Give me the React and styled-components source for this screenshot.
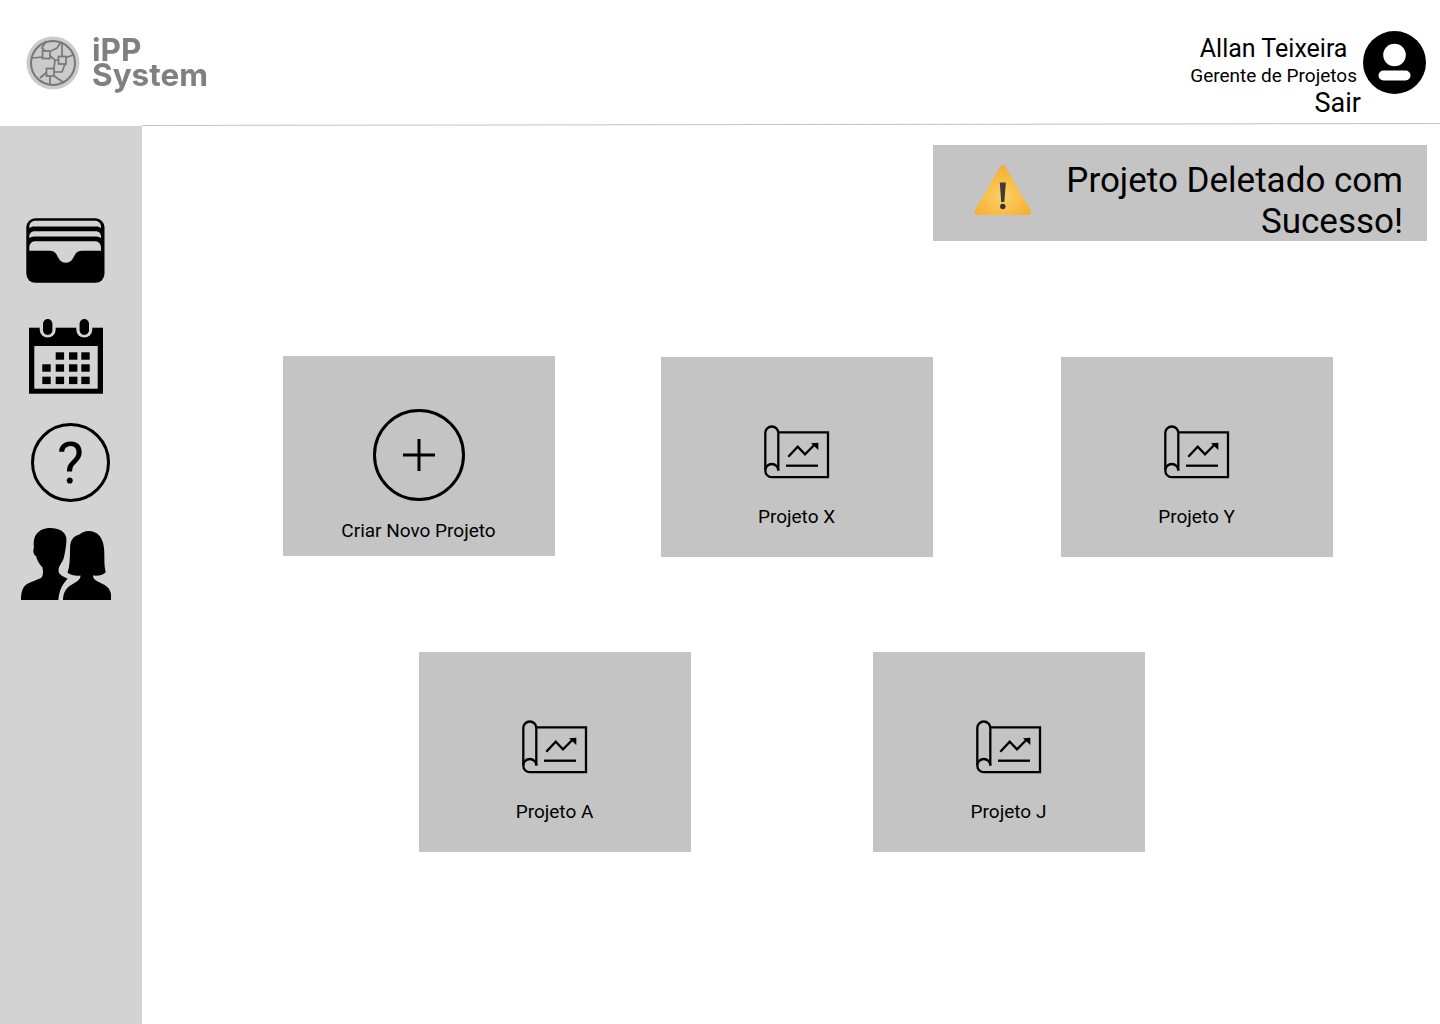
import React from "react";
import styled, { createGlobalStyle } from "styled-components";

const Global = createGlobalStyle`
  html, body { margin: 0; padding: 0; background: #fff; }
  body { font-family: Roboto, "Liberation Sans", sans-serif; color: #000; }
`;

const Page = styled.div`
  width: 1440px;
  height: 1024px;
  overflow: hidden;
  display: flex;
  flex-direction: column;
`;

const Header = styled.header`
  height: 124px;
  flex: none;
  display: flex;
  justify-content: space-between;
  align-items: flex-start;
  padding: 0 14px 0 26px;
  box-sizing: border-box;
`;

const Brand = styled.div`
  display: flex;
  align-items: flex-start;
  gap: 12px;
  padding-top: 36px;
  filter: blur(0.4px);
`;

const BrandName = styled.div`
  font-family: Inter, "Liberation Sans", sans-serif;
  font-weight: 700;
  font-size: 31.5px;
  line-height: 25px;
  margin-top: 1px;
  color: #808080;
`;

const User = styled.div`
  display: flex;
  align-items: flex-start;
  gap: 2px;
  padding-top: 31px;
`;

const UserInfo = styled.div`
  display: flex;
  flex-direction: column;
  margin-top: 3px;
`;

const UserName = styled.div`
  font-size: 25px;
  line-height: 30px;
  text-align: center;
  padding-right: 4px;
`;

const UserRole = styled.div`
  font-size: 19px;
  line-height: 23px;
  text-align: center;
  padding-right: 4px;
`;

const SignOut = styled.div`
  font-size: 27px;
  line-height: 28px;
  text-align: right;
  margin-top: 2px;
`;

const Rule = styled.div`
  height: 1px;
  flex: none;
  margin-left: 142px;
  background: #c4c4c4;
  transform: rotate(-0.08deg);
  margin-bottom: 1px;
`;

const Body = styled.div`
  flex: 1;
  display: flex;
  min-height: 0;
`;

const Sidebar = styled.nav`
  width: 142px;
  flex: none;
  background: #d3d3d3;
  display: flex;
  flex-direction: column;
  align-items: flex-start;
  padding-top: 92px;
  box-sizing: border-box;
`;

const NavSlot = styled.div`
  margin-left: ${(p) => p.$left}px;
  margin-top: ${(p) => p.$top}px;
  display: flex;
  svg { display: block; }
`;

const HelpCircle = styled.div`
  width: 79px;
  height: 79px;
  box-sizing: border-box;
  border: 3px solid #000;
  border-radius: 50%;
  padding-top: 2px;
  display: flex;
  align-items: center;
  justify-content: center;
  font-size: 57px;
  font-weight: 400;
  line-height: 1;
`;

const Main = styled.main`
  flex: 1;
  display: flex;
  flex-direction: column;
  min-width: 0;
`;

const Notice = styled.div`
  align-self: flex-end;
  width: 494px;
  height: 96px;
  margin: 19px 13px 0 0;
  padding: 0 24px 0 41px;
  box-sizing: border-box;
  background: #c4c4c4;
  display: flex;
  align-items: center;
  justify-content: space-between;
  svg { margin-bottom: 5px; }
`;

const NoticeText = styled.div`
  width: 370px;
  margin-top: 16px;
  font-size: 35px;
  line-height: 41px;
  text-align: right;
`;

const Row = styled.div`
  display: flex;
  align-items: flex-start;
  margin-top: ${(p) => p.$top}px;
`;

const Card = styled.div`
  width: 272px;
  height: 200px;
  flex: none;
  margin-left: ${(p) => p.$left}px;
  margin-top: ${(p) => p.$drop || 0}px;
  background: #c4c4c4;
  display: flex;
  flex-direction: column;
  align-items: center;
  box-sizing: border-box;
  padding-top: ${(p) => p.$pad}px;
`;

const CardLabel = styled.div`
  font-size: 19px;
  line-height: 22px;
  margin-top: ${(p) => p.$gap}px;
  margin-right: 1px;
`;

const WalletIcon = () => (
  <svg width="80" height="66" viewBox="26 218 80 66">
    <rect x="26.3" y="218.3" width="78.2" height="64.5" rx="9" fill="#000" />
    <g fill="#d3d3d3">
      <path d="M29.3 228.3v-1.6c0-3.4 2.6-6 6-6h59.7c3.4 0 6 2.6 6 6v1.6c-1-1.2-2.6-1.8-4.6-1.8H34c-2 0-3.6.6-4.7 1.8z" />
      <path d="M29.3 238.3v-1.8c0-3 2.3-5.2 5.2-5.2h61.3c3 0 5.2 2.2 5.2 5.2v1.8c-1-1.1-2.6-1.8-4.6-1.8H34c-2 0-3.6.7-4.7 1.8z" />
      <path d="M29.3 250.7v-3.2c0-3.5 2.5-6.2 6-6.2h59.7c3.5 0 6 2.7 6 6.2v3.2H82c-3 0-5 .7-6.6 3.3l-2.4 4.2c-1.5 2.8-4 4.5-7.2 4.5s-5.7-1.7-7.2-4.5l-2.4-4.2c-1.6-2.6-3.6-3.3-6.6-3.3z" />
    </g>
  </svg>
);

const calendarRows = [
  { y: 352.3, xs: [55.7, 69, 81.3] },
  { y: 364.3, xs: [42.3, 55.7, 69, 81.3] },
  { y: 376.7, xs: [42.3, 55.7, 69, 81.3] },
];

const CalendarIcon = () => (
  <svg width="74" height="75" viewBox="29 319 74 75">
    <rect x="29" y="327.7" width="74" height="66" fill="#000" />
    <rect x="34.3" y="346" width="63.4" height="42.7" fill="#d3d3d3" />
    {calendarRows.map(({ y, xs }) =>
      xs.map((x) => <rect key={`${x}-${y}`} x={x} y={y} width="8.4" height="7.4" fill="#000" />)
    )}
    {[47.7, 84.3].map((x) => (
      <g key={x}>
        <path d={`M${x - 8} 327v2.5a8 8 0 0 0 16 0V327z`} fill="#d3d3d3" />
        <rect x={x - 4.7} y="319" width="9.4" height="16" rx="4.7" fill="#000" />
      </g>
    ))}
  </svg>
);

const PeopleIcon = () => (
  <svg width="90" height="73" viewBox="21 527 90 73">
    <path d="M21 600c0-10 2.5-14.5 8-17l12-5c2.2-1.5 2.3-6 1.5-10.5-3-3-5.5-7-6.5-11.5-2.5-1-3.4-5.5-2-8.5-.6-4-.4-10 2.500-13.500 3.500-4.500 9-6 14-6 8 0 15 3.500 15.800 10 .4 4-.6 12-2.400 19.500-1.200 5-5.400 8-5.400 13 0 3.600 3.400 5.500 9.200 8.300-4.500 4.500-8.200 10-9.400 21.200z" fill="#000" />
    <path d="M63 600c0-7 3-12.5 9-15.5l5.500-3.500c2-1.300 3-3 3-5.400-4.700.6-9.500-.1-13-2.800 2.300-6.500 2.500-16 2.500-23.800 0-8.500 3-13 9.500-14.500 2.700-2.200 5.500-3.500 9-3.500 9 0 14.500 6.500 15.500 17 .8 8-.3 17 1.800 24.300-3 3-7.800 3.800-12.800 3.300 0 3 1.700 4.300 4.700 5.800l7 3.700c5 3 7 7.500 7 15.500z" fill="#000" />
  </svg>
);

const ProjectIcon = () => (
  <svg width="66" height="54" viewBox="0 0 66 54" fill="none" stroke="#000" strokeWidth="2.3">
    <path d="M1.3 45.5V8a6.500 6.500 0 0 1 13 0v37.500" />
    <path d="M1.3 45.5a6.500 6.500 0 0 1 13 0" />
    <path d="M1.3 45.5c0 3.800 2.800 6.700 6.500 6.700H64V7.300H14.300" />
    <path d="M22 40.7h32" />
    <path d="M24.3 31.7l9.400-10 7.300 7.600 10-10" />
    <path d="M47 18.3l7.300-.6V25z" fill="#000" stroke="none" />
  </svg>
);

const PlusIcon = () => (
  <svg width="92" height="92" viewBox="0 0 92 92" fill="none" stroke="#000" strokeWidth="3">
    <circle cx="46" cy="46" r="44.5" />
    <path d="M30 46h32M46 30v32" />
  </svg>
);

const WarningIcon = () => (
  <svg width="58" height="51" viewBox="0 0 58 51">
    <defs>
      <radialGradient id="warn" cx="50%" cy="62%" r="60%">
        <stop offset="0%" stopColor="#fdd06a" />
        <stop offset="100%" stopColor="#f5af2c" />
      </radialGradient>
    </defs>
    <path d="M25.7 2.4c1.500-2.400 4.700-2.400 6.200 0l24.800 43.200c1 1.900-.2 4.400-2.400 4.400H3.300C1.100 50-.1 47.500.9 45.600z" fill="url(#warn)" />
    <path d="M25.8 17.5h6l-1.400 19.500h-3.200z" fill="#3c3c3c" />
    <circle cx="28.8" cy="41.5" r="2.700" fill="#333" />
  </svg>
);

const AvatarIcon = () => (
  <svg width="63" height="63" viewBox="0 0 63 63">
    <circle cx="31.5" cy="31.5" r="31.5" fill="#000" />
    <circle cx="31.5" cy="24" r="11.3" fill="#fff" />
    <rect x="15.5" y="39.5" width="32" height="10" rx="5" fill="#fff" />
  </svg>
);

const LogoIcon = () => (
  <svg width="54" height="54" viewBox="0 0 54 54" fill="none" stroke="#777" strokeWidth="1.7">
    <circle cx="27" cy="27" r="26.5" fill="#cbcbcb" stroke="none" />
    <circle cx="27" cy="27" r="22" strokeWidth="2" />
    <path d="M20 5l-4 7 4 4M35 6l-4 6-6 3M36 7v14M24 20l5 4h5M29 24l-1 8M17 21l-11 1M39 28l-3 8h-8M21 36l-7 6M28 40l9 6M39 22l8-3M24 40v8" />
    <g fill="#cbcbcb">
      <rect x="16.5" y="15" width="7.5" height="7.5" />
      <rect x="32.5" y="20.5" width="7.5" height="7.5" />
      <rect x="20.5" y="32.5" width="7.5" height="7.5" />
    </g>
  </svg>
);

const Project = ({ name, left, drop }) => (
  <Card $left={left} $drop={drop} $pad={68}>
    <ProjectIcon />
    <CardLabel $gap={27}>{name}</CardLabel>
  </Card>
);

export default function App() {
  return (
    <Page>
      <Global />
      <Header>
        <Brand>
          <LogoIcon />
          <BrandName>
            iPP
            <br />
            System
          </BrandName>
        </Brand>
        <User>
          <UserInfo>
            <UserName>Allan Teixeira</UserName>
            <UserRole>Gerente de Projetos</UserRole>
            <SignOut>Sair</SignOut>
          </UserInfo>
          <AvatarIcon />
        </User>
      </Header>
      <Rule />
      <Body>
        <Sidebar>
          <NavSlot $left={26} $top={0}>
            <WalletIcon />
          </NavSlot>
          <NavSlot $left={29} $top={35}>
            <CalendarIcon />
          </NavSlot>
          <NavSlot $left={31} $top={29}>
            <HelpCircle>?</HelpCircle>
          </NavSlot>
          <NavSlot $left={21} $top={25}>
            <PeopleIcon />
          </NavSlot>
        </Sidebar>
        <Main>
          <Notice>
            <WarningIcon />
            <NoticeText>Projeto Deletado com Sucesso!</NoticeText>
          </Notice>
          <Row $top={115}>
            <Card $left={141} $pad={53}>
              <PlusIcon />
              <CardLabel $gap={19}>Criar Novo Projeto</CardLabel>
            </Card>
            <Project name="Projeto X" left={106} drop={1} />
            <Project name="Projeto Y" left={128} drop={1} />
          </Row>
          <Row $top={95}>
            <Project name="Projeto A" left={277} />
            <Project name="Projeto J" left={182} />
          </Row>
        </Main>
      </Body>
    </Page>
  );
}
